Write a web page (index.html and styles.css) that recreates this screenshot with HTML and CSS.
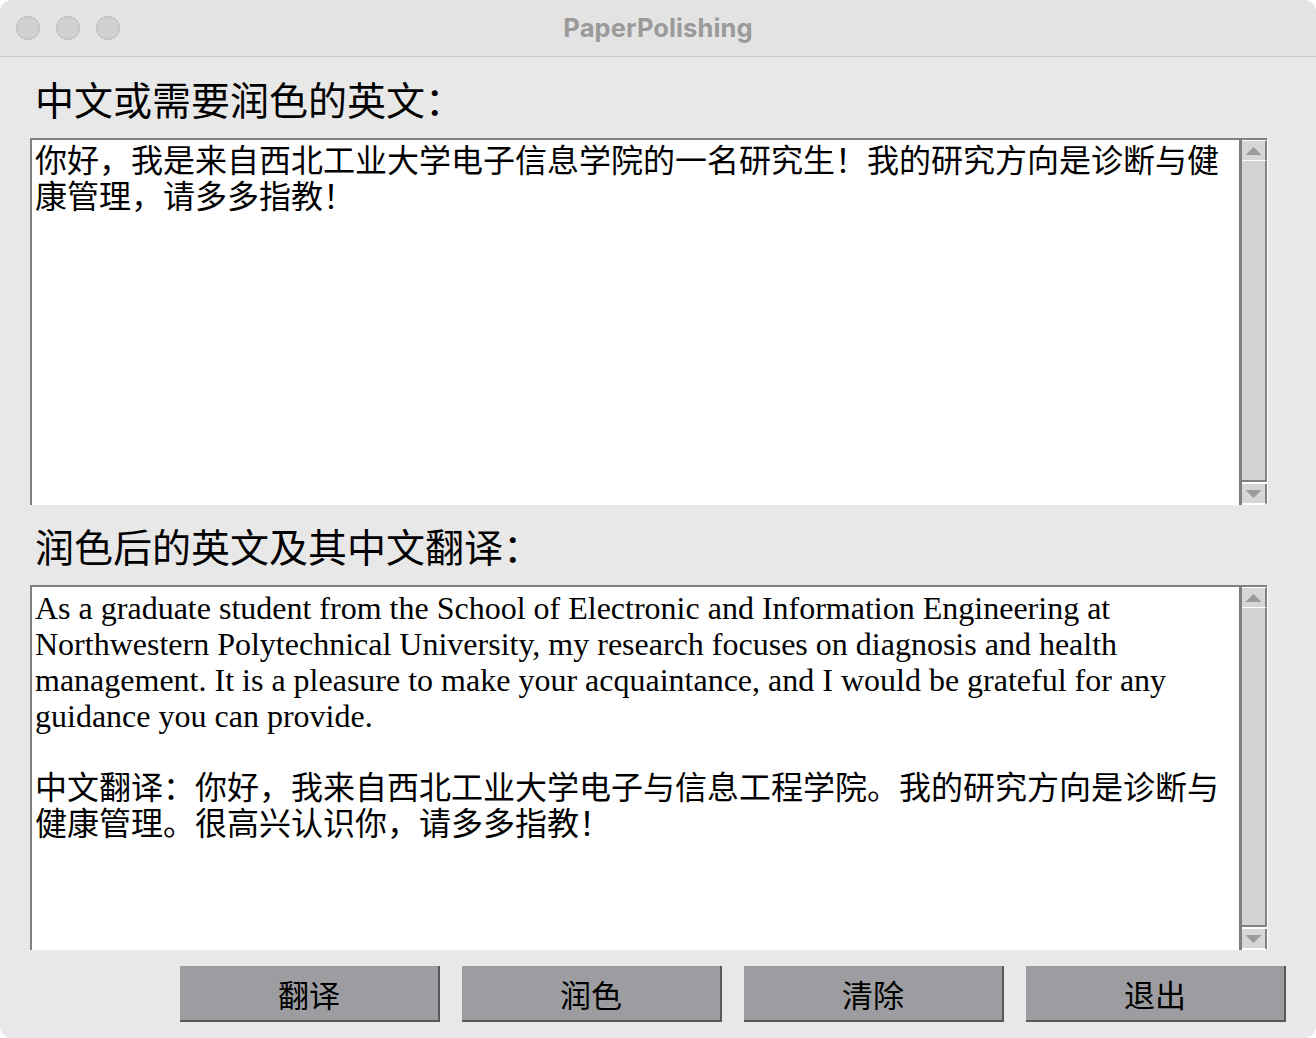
FILE: index.html
```html
<!DOCTYPE html>
<html lang="zh-CN">
<head>
<meta charset="utf-8">
<title>PaperPolishing</title>
<link rel="stylesheet" href="styles.css">
</head>
<body>
<div class="window">
  <div class="titlebar">
    <div class="lights">
      <span class="light"></span>
      <span class="light"></span>
      <span class="light"></span>
    </div>
    <div class="title">PaperPolishing</div>
    <div></div>
  </div>
  <div class="content">
    <div class="label label-top">中文或需要润色的英文：</div>
    <div class="textbox tb1">
      <div class="text">你好，我是来自西北工业大学电子信息学院的一名研究生！我的研究方向是诊断与健康管理，请多多指教！</div>
      <div class="scrollbar">
        <div class="sb-inner">
          <div class="sb-btn sb-up"><svg width="23" height="18" viewBox="0 0 23 18"><polygon points="3.5,13 19.5,13 11.5,5" fill="#9b9b9b"/></svg></div>
          <div class="sb-thumb"></div>
          <div class="sb-btn sb-down"><svg width="23" height="18" viewBox="0 0 23 18"><polygon points="3.5,5 19.5,5 11.5,13" fill="#9b9b9b"/></svg></div>
        </div>
      </div>
    </div>
    <div class="label label-bottom">润色后的英文及其中文翻译：</div>
    <div class="textbox tb2">
      <div class="text">As a graduate student from the School of Electronic and Information Engineering at Northwestern Polytechnical University, my research focuses on diagnosis and health management. It is a pleasure to make your acquaintance, and I would be grateful for any guidance you can provide.

中文翻译：你好，我来自西北工业大学电子与信息工程学院。我的研究方向是诊断与健康管理。很高兴认识你，请多多指教！</div>
      <div class="scrollbar">
        <div class="sb-inner">
          <div class="sb-btn sb-up"><svg width="23" height="18" viewBox="0 0 23 18"><polygon points="3.5,13 19.5,13 11.5,5" fill="#9b9b9b"/></svg></div>
          <div class="sb-thumb"></div>
          <div class="sb-btn sb-down"><svg width="23" height="18" viewBox="0 0 23 18"><polygon points="3.5,5 19.5,5 11.5,13" fill="#9b9b9b"/></svg></div>
        </div>
      </div>
    </div>
    <div class="buttons">
      <div class="btn">翻译</div>
      <div class="btn">润色</div>
      <div class="btn">清除</div>
      <div class="btn">退出</div>
    </div>
  </div>
</div>
</body>
</html>
```

FILE: styles.css
```css
* { box-sizing: border-box; }
html, body { margin: 0; padding: 0; background: #ffffff; }
.window {
  width: 1316px;
  height: 1038px;
  border-radius: 12px;
  overflow: hidden;
  background: #e8e8e8;
}
.titlebar {
  height: 57px;
  background: #e3e3e3;
  border-bottom: 1px solid #c6c6c6;
  display: grid;
  grid-template-columns: 1fr auto 1fr;
  align-items: center;
}
.lights {
  display: flex;
  gap: 16px;
  padding-left: 16px;
}
.light {
  width: 24px;
  height: 24px;
  border-radius: 50%;
  background: #d0d0d0;
  border: 1px solid #b9b9b9;
}
.title {
  font-family: Inter, "Liberation Sans", sans-serif;
  font-weight: 700;
  font-size: 25.5px;
  letter-spacing: 0.1px;
  color: #9a9a9a;
  padding-bottom: 2px;
}
.content {
  padding-left: 30px;
}
.label {
  font-family: "Noto Sans CJK SC", sans-serif;
  font-size: 39px;
  color: #000;
  padding-left: 5px;
  display: flex;
  align-items: center;
}
.label-top { height: 81px; padding-top: 0; }
.label-bottom { height: 80px; padding-top: 0; }
.textbox {
  width: 1237px;
  display: flex;
  border-top: 2px solid #818181;
  border-left: 2px solid #818181;
}
.tb1 { height: 367px; }
.tb2 { height: 365px; }
.text {
  flex: 1;
  background: #ffffff;
  padding: 3px 2px 0 3px;
  font-family: "Liberation Serif", "Noto Sans CJK SC", serif;
  font-size: 32px;
  line-height: 36px;
  color: #000;
  white-space: pre-wrap;
  overflow: hidden;
}
.scrollbar {
  width: 29px;
  display: flex;
  background: #ffffff;
  padding-left: 1px;
}
.sb-inner {
  flex: 1;
  display: flex;
  flex-direction: column;
  border-left: 3px solid #7f7f7f;
  border-right: 1px solid #ffffff;
}
.sb-btn {
  height: 19px;
  background: #d6d6d6;
  border-right: 2px solid #828282;
  display: flex;
  align-items: center;
  justify-content: center;
}
.sb-up { border-top: 1px solid #ffffff; height: 20px; }
.sb-down { border-bottom: 2px solid #ffffff; height: 21px; }
.sb-thumb {
  flex: 1;
  background: #d3d3d3;
  border-top: 1px solid #ffffff;
  border-right: 2px solid #828282;
  border-bottom: 2px solid #828282;
  margin-bottom: 2px;
}
.buttons {
  display: flex;
  gap: 22px;
  margin-top: 16px;
  padding-left: 150px;
}
.btn {
  width: 260px;
  height: 56px;
  background: #9d9da1;
  border-right: 2px solid #58585a;
  border-bottom: 2px solid #58585a;
  font-family: "Noto Sans CJK SC", serif;
  font-size: 31px;
  color: #000;
  display: flex;
  align-items: center;
  justify-content: center;
}
```
